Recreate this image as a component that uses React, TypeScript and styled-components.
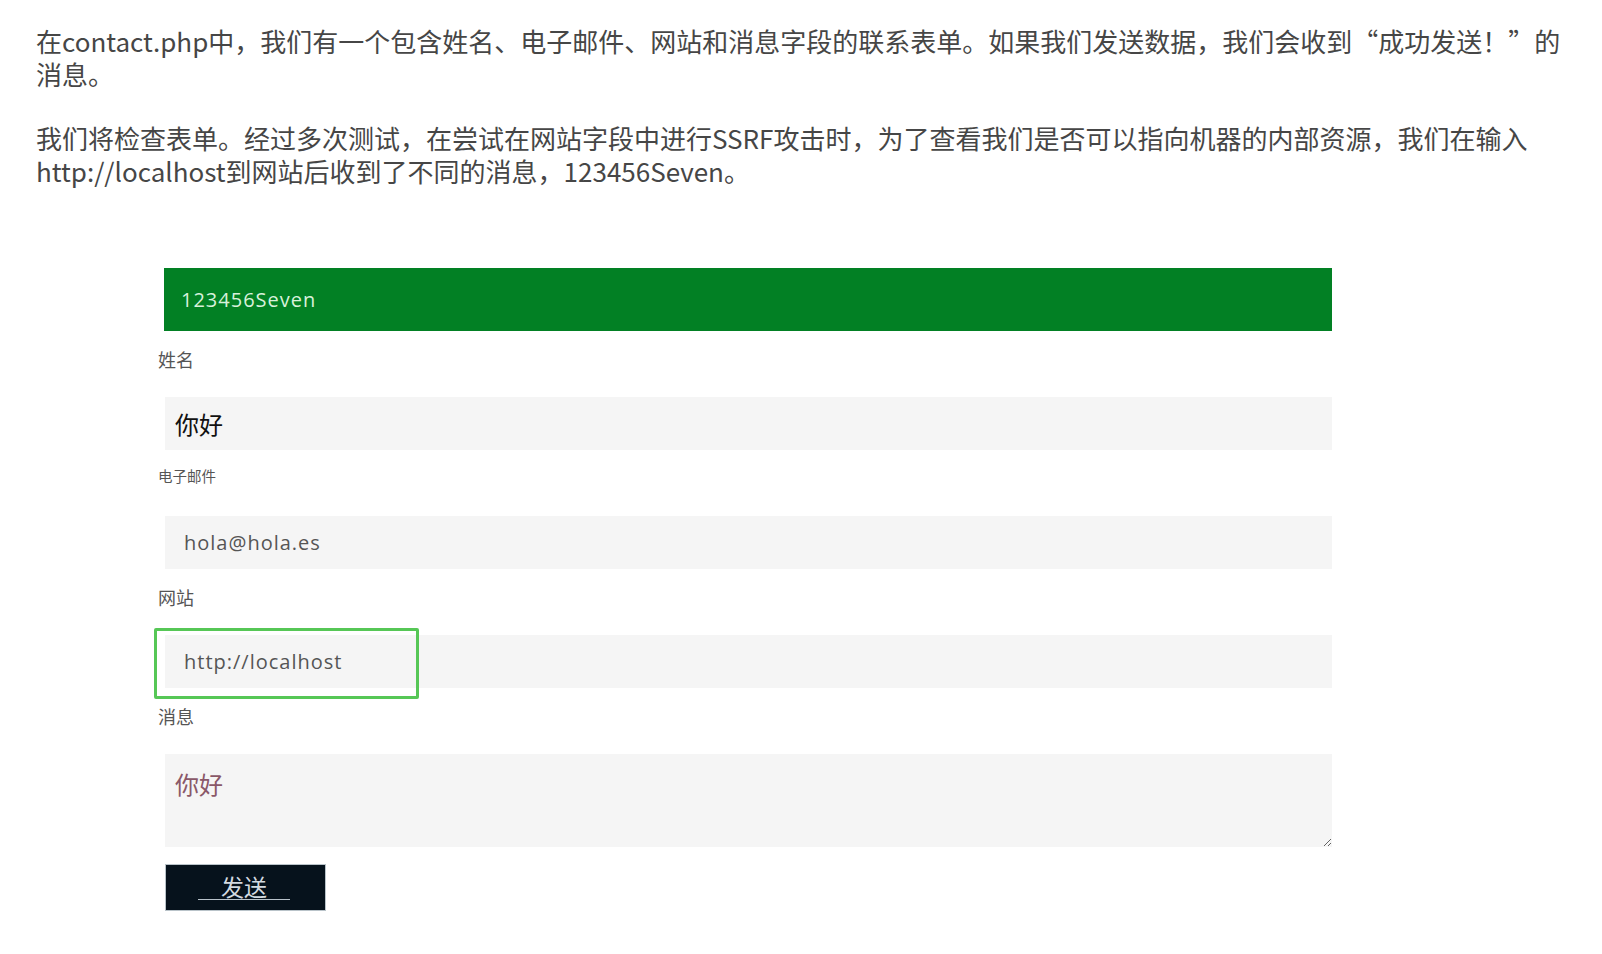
import React from "react";
import styled, { createGlobalStyle } from "styled-components";

const GlobalStyle = createGlobalStyle`
  body {
    margin: 0;
    background: #ffffff;
  }
`;

const CJK = `"Noto Sans CJK SC", "Noto Sans", sans-serif`;
const LATIN = `"Open Sans", "Noto Sans CJK SC", sans-serif`;

export default function App() {
  return (
    <>
      <GlobalStyle />
      <Page>
        <Paragraph>
          在contact.php中，我们有一个包含姓名、电子邮件、网站和消息字段的联系表单。如果我们发送数据，我们会收到“成功发送！”的
          <br />
          消息。
        </Paragraph>
        <Paragraph>
          我们将检查表单。经过多次测试，在尝试在网站字段中进行SSRF攻击时，为了查看我们是否可以指向机器的内部资源，我们在输入
          <br />
          http://localhost到网站后收到了不同的消息，123456Seven。
        </Paragraph>

        <Form onSubmit={(e) => e.preventDefault()}>
          <Alert>123456Seven</Alert>

          <Label>姓名</Label>
          <Input $cjk readOnly defaultValue="你好" />

          <Label $small>电子邮件</Label>
          <Input readOnly defaultValue="hola@hola.es" />

          <Label>网站</Label>
          <Highlighted>
            <Input readOnly defaultValue="http://localhost" />
            <Marker />
          </Highlighted>

          <Label>消息</Label>
          <Message readOnly defaultValue="你好" />

          <Submit type="submit">
            <SubmitText>发送</SubmitText>
          </Submit>
        </Form>
      </Page>
    </>
  );
}

const Page = styled.div`
  padding: 24px 0 40px 36px;
`;

const Paragraph = styled.p`
  margin: 0 0 31px;
  font-family: ${CJK};
  font-size: 26px;
  line-height: 33px;
  color: #464646;
  white-space: nowrap;
`;

const Form = styled.form`
  display: flex;
  flex-direction: column;
  align-items: flex-start;
  margin: 81px 0 0 122px;
  width: 1174px;
`;

const Alert = styled.div`
  box-sizing: border-box;
  align-self: stretch;
  margin-left: 6px;
  height: 63px;
  display: flex;
  align-items: center;
  padding-left: 17px;
  background: #028024;
  font-family: ${LATIN};
  font-size: 20px;
  letter-spacing: 1px;
  color: #d8f1db;
`;

const Label = styled.label<{ $small?: boolean }>`
  box-sizing: border-box;
  display: block;
  height: 66px;
  padding-top: ${(p) => (p.$small ? 14 : 16)}px;
  font-family: ${CJK};
  font-size: ${(p) => (p.$small ? 14.5 : 18)}px;
  line-height: 24px;
  color: #555555;
`;

const Input = styled.input<{ $cjk?: boolean }>`
  box-sizing: border-box;
  align-self: stretch;
  margin: 0 0 0 7px;
  height: 53px;
  border: none;
  outline: none;
  background: #f5f5f5;
  padding: 0 0 0 ${(p) => (p.$cjk ? 10 : 19)}px;
  font-family: ${(p) => (p.$cjk ? CJK : LATIN)};
  font-size: ${(p) => (p.$cjk ? 24 : 20)}px;
  letter-spacing: ${(p) => (p.$cjk ? 0 : 1)}px;
  color: ${(p) => (p.$cjk ? "#111111" : "#555555")};
`;

const Highlighted = styled.div`
  position: relative;
  align-self: stretch;
  display: flex;
  flex-direction: column;
`;

const Marker = styled.div`
  position: absolute;
  left: -4px;
  top: -7px;
  width: 265px;
  height: 71px;
  box-sizing: border-box;
  border: 3px solid #56c756;
  border-radius: 2px;
  pointer-events: none;
`;

const Message = styled.textarea`
  box-sizing: border-box;
  align-self: stretch;
  margin: 0 0 17px 7px;
  height: 93px;
  border: none;
  outline: none;
  resize: vertical;
  background: #f5f5f5;
  padding: 16px 10px;
  font-family: ${CJK};
  font-size: 24px;
  line-height: 28px;
  color: #8a5868;
`;

const Submit = styled.button`
  box-sizing: border-box;
  margin-left: 7px;
  width: 161px;
  height: 47px;
  padding: 0 3px 0 0;
  display: flex;
  align-items: center;
  justify-content: center;
  background: #06121c;
  border: 1px solid #b9c3c9;
  border-radius: 0;
  cursor: pointer;
`;

const SubmitText = styled.span`
  display: inline-block;
  padding: 0 23px 1px;
  border-bottom: 1px solid #b8c2ca;
  font-family: ${CJK};
  font-size: 23px;
  line-height: 1;
  color: #d3dae0;
`;
